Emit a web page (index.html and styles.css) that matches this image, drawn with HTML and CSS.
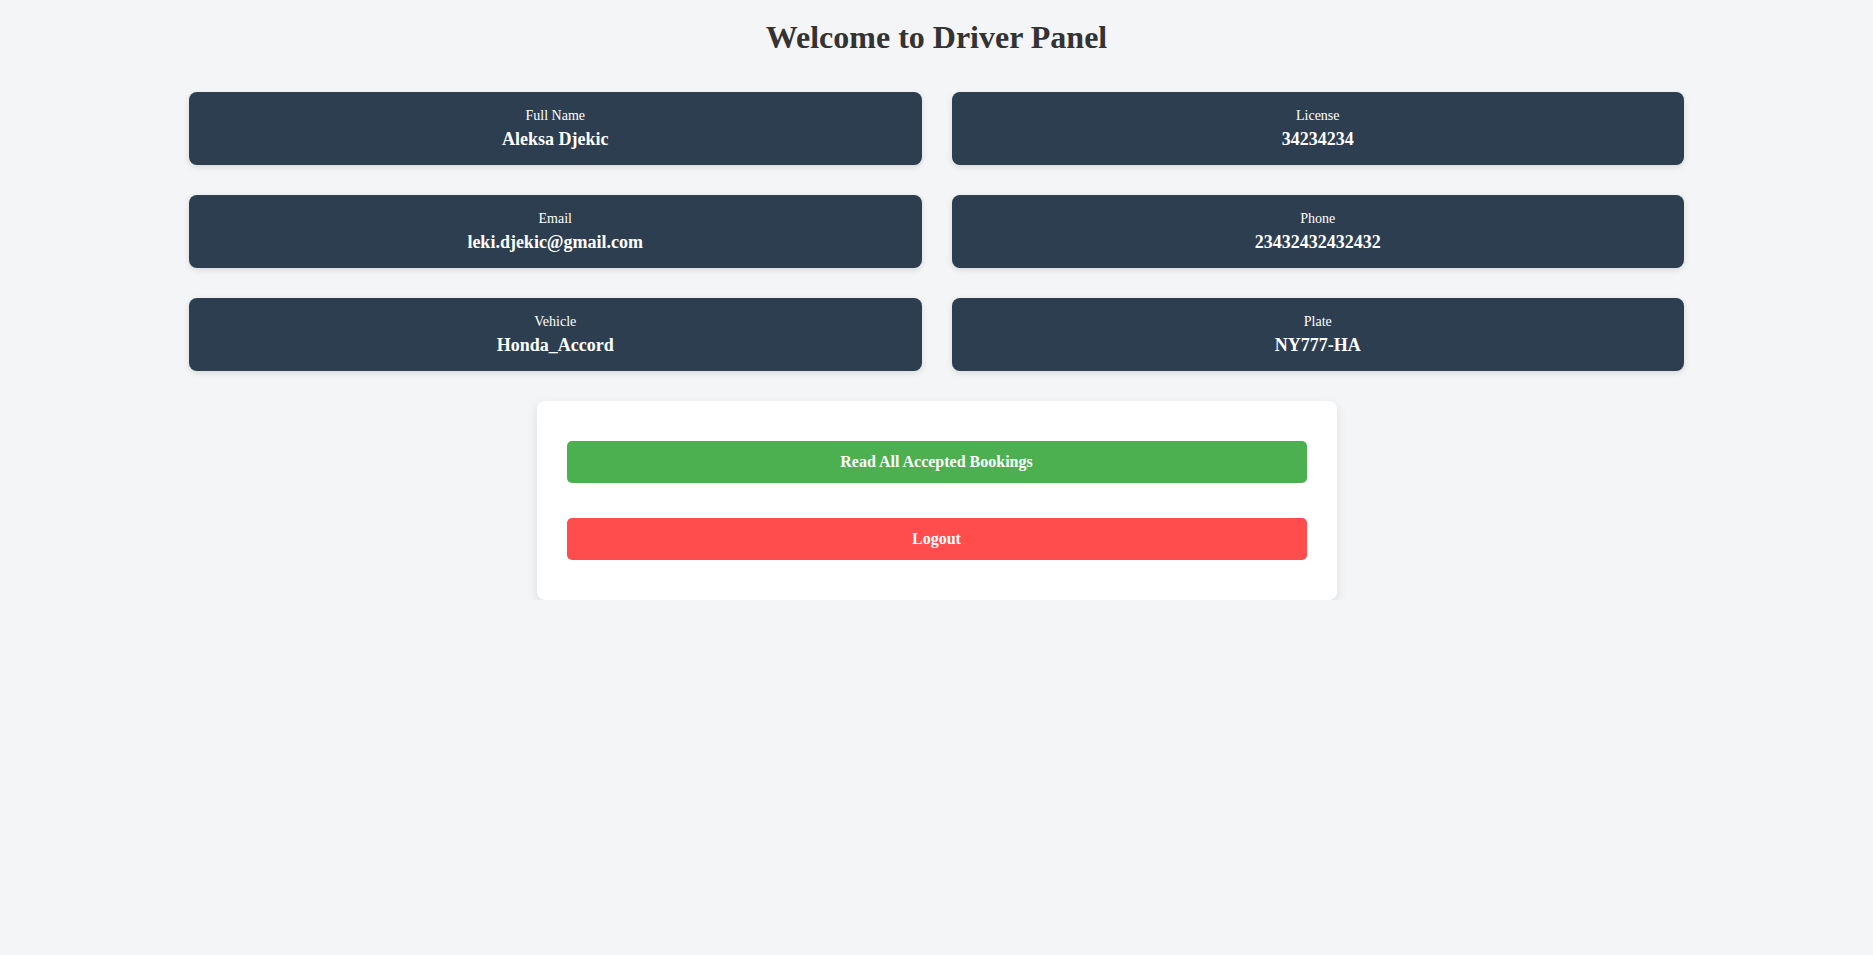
FILE: index.html
```html
<!DOCTYPE html>
<html lang="en">
<head>
<meta charset="utf-8">
<title>Driver Panel</title>
<link rel="stylesheet" href="styles.css">
</head>
<body>
<h1 class="title">Welcome to Driver Panel</h1>
<div class="info-grid">
  <div class="info-card"><div class="label">Full Name</div><div class="value">Aleksa Djekic</div></div>
  <div class="info-card"><div class="label">License</div><div class="value">34234234</div></div>
  <div class="info-card"><div class="label">Email</div><div class="value">leki.djekic@gmail.com</div></div>
  <div class="info-card"><div class="label">Phone</div><div class="value">23432432432432</div></div>
  <div class="info-card"><div class="label">Vehicle</div><div class="value">Honda_Accord</div></div>
  <div class="info-card"><div class="label">Plate</div><div class="value">NY777-HA</div></div>
</div>
<div class="actions">
  <button class="btn btn-green">Read All Accepted Bookings</button>
  <button class="btn btn-red">Logout</button>
</div>
</body>
</html>
```
FILE: styles.css
```css
html, body {
  margin: 0;
  padding: 0;
}
body {
  background: #f4f5f7;
  font-family: "Liberation Serif", "Times New Roman", serif;
  color: #333;
  padding-top: 19px;
}
.title {
  margin: 0 0 37px;
  text-align: center;
  font-size: 32px;
  font-weight: bold;
  color: #333;
  line-height: 36px;
}
.info-grid {
  max-width: 1495px;
  margin: 0 auto;
  display: grid;
  grid-template-columns: 1fr 1fr;
  gap: 30px;
}
.info-card {
  background: #2c3e50;
  color: #fff;
  border-radius: 8px;
  box-shadow: 0 2px 6px rgba(0, 0, 0, 0.12);
  height: 73px;
  box-sizing: border-box;
  padding-top: 16px;
  text-align: center;
}
.label {
  font-size: 14px;
  line-height: 16px;
}
.value {
  margin-top: 4px;
  font-size: 18px;
  font-weight: bold;
  line-height: 22px;
}
.actions {
  width: 800px;
  box-sizing: border-box;
  margin: 30px auto 0;
  background: #fff;
  border-radius: 8px;
  box-shadow: 0 4px 12px rgba(0, 0, 0, 0.1);
  padding: 40px 30px;
  display: flex;
  flex-direction: column;
  gap: 35px;
}
.btn {
  display: block;
  width: 100%;
  height: 42px;
  border: none;
  border-radius: 5px;
  color: #fff;
  font-family: "Liberation Serif", "Times New Roman", serif;
  font-size: 16px;
  font-weight: bold;
  cursor: pointer;
}
.btn-green {
  background: #4caf50;
}
.btn-red {
  background: #ff4d4d;
}
```
